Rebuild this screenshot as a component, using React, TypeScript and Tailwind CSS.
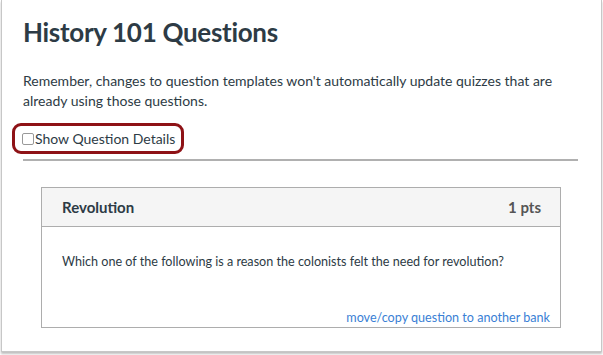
const App = () => {
  return (
    <div
      className="h-[355px] w-[603px] bg-white text-[#2d3b45]"
      style={{ fontFamily: "Lato, 'Liberation Sans', sans-serif" }}
    >
      <div className="ml-[1px] h-[352px] w-[601px] border-x border-b border-[#c7c7c7] bg-white shadow-[0_2px_2px_rgba(0,0,0,0.25)]">
        <div className="px-[21px] pt-[14px]">
          <h1 className="text-[26px] font-bold leading-[36px] tracking-[-0.3px]">History 101 Questions</h1>
          <p className="mt-[21px] text-[14px] leading-[20px]">
            Remember, changes to question templates won't automatically update quizzes that are already using those
            questions.
          </p>
          <div className="mt-[12px] flex">
            <label className="-ml-[11px] flex h-[31px] items-center rounded-[9px] border-[3px] border-[#8e1216] pl-[7px] pr-[6px] text-[14px]">
              <span className="mr-[1px] inline-block size-[12px] rounded-[2px] border border-[#999] bg-white" />
              Show Question Details
            </label>
          </div>
          <div className="mt-[5px] mr-[2px] h-[2px] bg-[#b0b0b0]" />
        </div>
        <div className="ml-[39px] mt-[26px] w-[520px] border border-[#adadad]">
          <div className="flex h-[39px] items-center justify-between border-b border-[#adadad] bg-[#f5f5f5] pl-[20px] pr-[19px] text-[15px] font-bold">
            <span>Revolution</span>
            <span className="text-[#555]">1 pts</span>
          </div>
          <div className="px-[20px] pt-[26px] text-[12.6px] leading-[18px]">
            Which one of the following is a reason the colonists felt the need for revolution?
          </div>
          <div className="flex justify-end pr-[10px] pt-[38px] text-[12.6px] leading-[18px] text-[#3a7fd5]">
            move/copy question to another bank
          </div>
        </div>
      </div>
    </div>
  );
};

export default App;
